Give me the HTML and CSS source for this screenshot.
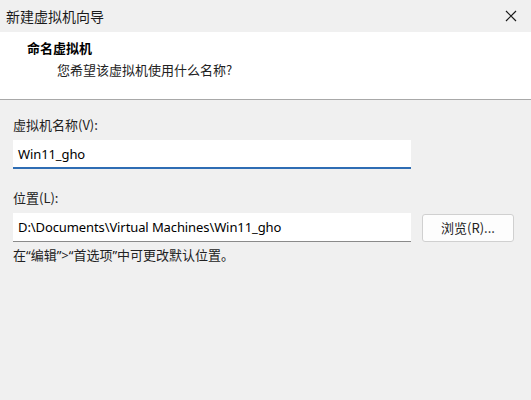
FILE: index.html
```html
<!DOCTYPE html>
<html lang="zh-CN">
<head>
<meta charset="utf-8">
<title>新建虚拟机向导</title>
<link rel="stylesheet" href="styles.css">
</head>
<body>
<div class="dialog">
  <div class="titlebar">
    <span class="title">新建虚拟机向导</span>
    <span class="close">
      <svg width="12" height="12" viewBox="0 0 12 12"><path d="M1 1 L11 11 M11 1 L1 11" stroke="#1a1a1a" stroke-width="1.2" fill="none"/></svg>
    </span>
  </div>
  <div class="header">
    <div class="h-title">命名虚拟机</div>
    <div class="h-sub">您希望该虚拟机使用什么名称?</div>
  </div>
  <div class="body">
    <div class="label">虚拟机名称(V):</div>
    <div class="row">
      <div class="input focus">Win11_gho</div>
    </div>
    <div class="label second">位置(L):</div>
    <div class="row">
      <div class="input">D:\Documents\Virtual Machines\Win11_gho</div>
      <div class="button">浏览(R)...</div>
    </div>
    <div class="hint">在“编辑”&gt;“首选项”中可更改默认位置。</div>
  </div>
</div>
</body>
</html>
```
FILE: styles.css
```css
* { box-sizing: border-box; }
html, body { margin: 0; padding: 0; }
body {
  width: 531px;
  height: 400px;
  background: #f0f0f0;
  font-family: "Noto Sans CJK SC", "Noto Sans", sans-serif;
  color: #1a1a1a;
  overflow: hidden;
}
.dialog { display: flex; flex-direction: column; }
.titlebar {
  height: 32px;
  display: flex;
  align-items: center;
  justify-content: space-between;
  padding: 0 0 0 6px;
  background: #f0f0f0;
}
.title { font-size: 14px; line-height: 1; color: #1a1a1a; }
.close {
  width: 40px;
  height: 30px;
  display: flex;
  align-items: center;
  justify-content: center;
}
.header {
  background: #ffffff;
  height: 68px;
  border-bottom: 1px solid #a8a8a8;
  padding: 7px 0 0 27px;
}
.h-title { font-size: 13px; font-weight: bold; line-height: 18px; color: #000; }
.h-sub { font-size: 13px; line-height: 18px; padding-left: 30px; margin-top: 4px; color: #222; }
.body { padding: 16px 13px 0 13px; }
.label { font-size: 13px; line-height: 18px; color: #222; }
.label.second { margin-top: 20px; }
.row { display: flex; align-items: center; margin-top: 6px; }
.input {
  width: 398px;
  height: 29px;
  background: #fff;
  border-bottom: 1px solid #8a8a8a;
  font-family: "Noto Sans", "Noto Sans CJK SC", sans-serif;
  font-size: 13px;
  letter-spacing: -0.1px;
  line-height: 28px;
  padding: 0 5px;
  color: #000;
}
.input.focus { border-bottom: 2px solid #2e6db4; }
.button {
  margin-left: 11px;
  width: 92px;
  height: 28px;
  background: #fdfdfd;
  border: 1px solid #d0d0d0;
  border-radius: 3px;
  font-size: 13px;
  display: flex;
  align-items: center;
  justify-content: center;
  color: #222;
}
.hint {
  font-family: "Noto Sans", "Noto Sans CJK SC", sans-serif;
  font-size: 13px;
  line-height: 18px;
  margin-top: 4px;
  color: #222;
}
```
